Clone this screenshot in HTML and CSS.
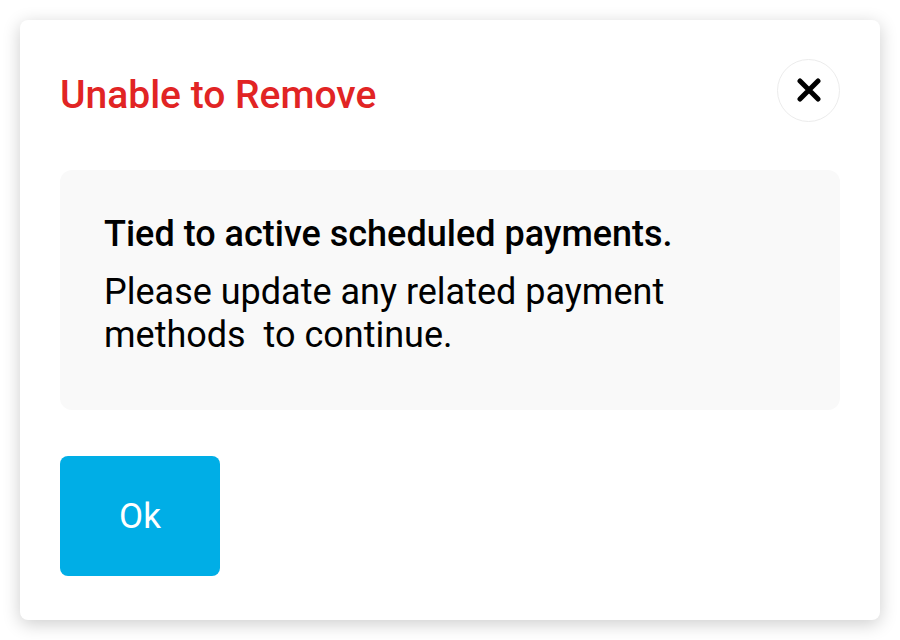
FILE: index.html
```html
<!DOCTYPE html>
<html>
<head>
<meta charset="utf-8">
<link rel="stylesheet" href="styles.css">
</head>
<body>
<div class="modal">
  <div class="header">
    <h1 class="title">Unable to Remove</h1>
    <button class="close" aria-label="Close">
      <svg width="24" height="24" viewBox="0 0 24 24"><path d="M3 3 L21 21 M21 3 L3 21" stroke="#000" stroke-width="5" stroke-linecap="round" fill="none"/></svg>
    </button>
  </div>
  <div class="message">
    <p class="lead">Tied to active scheduled payments.</p>
    <p class="body">Please update any related payment<br>methods&nbsp; to continue.</p>
  </div>
  <button class="ok">Ok</button>
</div>
</body>
</html>
```
FILE: styles.css
```css
html, body { margin: 0; padding: 0; background: #fff; }
body { padding: 20px; font-family: Roboto, "Liberation Sans", sans-serif; }
.modal {
  width: 860px;
  height: 600px;
  box-sizing: border-box;
  background: #fff;
  border-radius: 8px;
  box-shadow: 0 4px 18px rgba(0,0,0,0.2);
  padding: 38px 40px 44px 40px;
  display: flex;
  flex-direction: column;
}
.header {
  display: flex;
  justify-content: space-between;
  align-items: center;
  height: 64px;
}
.title {
  margin: 0;
  margin-top: 10px;
  font-size: 39px;
  font-weight: 500;
  color: #e12424;
  line-height: 46px;
}
.close {
  width: 63px;
  height: 63px;
  border-radius: 50%;
  border: 1px solid #ececec;
  background: #fff;
  display: flex;
  align-items: center;
  justify-content: center;
  padding: 0;
}
.message {
  margin-top: 48px;
  height: 240px;
  box-sizing: border-box;
  background: #f9f9f9;
  border-radius: 12px;
  padding: 42px 44px;
}
.message p { margin: 0; color: #000; font-size: 36px; }
.lead { font-weight: 500; line-height: 44px; }
.body { margin-top: 15px !important; line-height: 43px; }
.ok {
  margin-top: 46px;
  width: 160px;
  height: 120px;
  border: none;
  border-radius: 8px;
  background: #00aee6;
  color: #fff;
  font-family: Roboto, "Liberation Sans", sans-serif;
  font-size: 35px;
  font-weight: 400;
  padding: 0;
}
```
